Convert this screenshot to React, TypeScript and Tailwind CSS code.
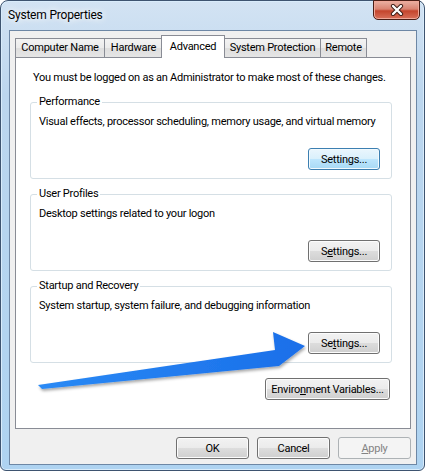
import React from 'react';

type BtnProps = {
  children: React.ReactNode;
  kind?: 'normal' | 'focus' | 'disabled';
  className?: string;
};

function Btn({ children, kind = 'normal', className = '' }: BtnProps) {
  const look =
    kind === 'focus'
      ? 'border-[#3c7fb1] bg-[linear-gradient(#eaf6fd,#d9f0fc_50%,#bee6fd_50%,#a7d9f5)] shadow-[inset_0_0_0_1px_#f2fafe] text-black'
      : kind === 'disabled'
        ? 'border-[#adb2b5] bg-[#f4f4f4] text-[#838383]'
        : 'border-[#707070] bg-[linear-gradient(#f2f2f2,#ebebeb_50%,#dddddd_50%,#cfcfcf)] shadow-[inset_0_0_0_1px_#fcfcfc] text-black';
  return (
    <div
      className={`flex items-center justify-center whitespace-nowrap rounded-[3px] border h-[22px] leading-none ${look} ${className}`}
    >
      {children}
    </div>
  );
}

function Group({ title, text, btn }: { title: string; text: string; btn: React.ReactNode }) {
  return (
    <fieldset className="w-[362px] rounded-[3px] border border-[#d5dfe5] px-0 pb-[8px]">
      <legend className="ml-[6px] px-[2px] leading-[16px]">{title}</legend>
      <div className="mt-[4px] whitespace-nowrap pl-[8px] leading-[16px]">{text}</div>
      <div className="mt-[18px] flex justify-end pr-[11px]">{btn}</div>
    </fieldset>
  );
}

const tabs = [
  { label: 'Computer Name', w: 'w-[90px]', ml: '' },
  { label: 'Hardware', w: 'w-[59px]', ml: '-ml-[1px]' },
  { label: 'Advanced', w: 'w-[64px]', ml: '-ml-[2px]', active: true },
  { label: 'System Protection', w: 'w-[97px]', ml: '-ml-[1px]' },
  { label: 'Remote', w: 'w-[47px]', ml: '-ml-[1px]' }
];

export default function App() {
  return (
    <div className="relative w-[426px] h-[474px] bg-white font-['Roboto',sans-serif] text-[11px] tracking-[-0.25px] text-black">
      <div className="flex h-[471px] w-[425px] flex-col rounded-t-[8px] rounded-b-[6px] border border-[#3e5470] bg-[linear-gradient(180deg,#d3e3f3,#bcd6ee_20%,#aed3f1)] shadow-[inset_0_0_0_1px_#d9ecfb]">
        {/* title bar */}
        <div className="flex h-[29px] items-start justify-between">
          <span className="pl-[7px] pt-[6px] text-[12px] leading-[16px] tracking-[-0.2px] text-black [text-shadow:0_0_6px_#fff,0_0_10px_#fff]">
            System Properties
          </span>
          <div className="mr-[4px] -mt-[1px] flex h-[20px] w-[47px] items-center justify-center rounded-b-[5px] border border-[#4a1e16] bg-[linear-gradient(#eab1a4,#d98371_45%,#c4452d_55%,#d8705a)] shadow-[inset_0_0_0_1px_#efa899]">
            <svg width="14" height="12" viewBox="0 0 14 12">
              <path d="M3 2 L11 10 M11 2 L3 10" stroke="#3b1b14" strokeWidth="4.2" strokeLinecap="round" />
              <path d="M3 2 L11 10 M11 2 L3 10" stroke="#ffffff" strokeWidth="2.4" strokeLinecap="round" />
            </svg>
          </div>
        </div>

        {/* client area */}
        <div className="mb-[5px] ml-[8px] mr-[7px] flex-1 border border-[#6d87a5] bg-[#f0f0f0] px-[5px]">
          <div className="flex h-[26px] items-end pt-[4px]">
            {tabs.map((t) =>
              t.active ? (
                <div
                  key={t.label}
                  className={`relative z-10 -mb-[1px] flex h-[23px] items-start justify-center whitespace-nowrap border border-b-0 border-[#898c95] bg-white pt-[3px] leading-[16px] ${t.w} ${t.ml}`}
                >
                  {t.label}
                </div>
              ) : (
                <div
                  key={t.label}
                  className={`flex h-[19px] items-center justify-center whitespace-nowrap border border-b-0 border-[#898c95] bg-[linear-gradient(#f3f3f3,#ebebeb_50%,#dedede_50%,#e5e5e5)] leading-[16px] ${t.w} ${t.ml}`}
                >
                  {t.label}
                </div>
              )
            )}
          </div>

          <div className="h-[372px] border border-[#898c95] bg-white pl-[14px]">
            <div className="mt-[12px] whitespace-nowrap pl-[3px] leading-[16px]">
              You must be logged on as an Administrator to make most of these changes.
            </div>
            <div className="mt-[8px] flex flex-col gap-[7px]">
              <Group
                title="Performance"
                text="Visual effects, processor scheduling, memory usage, and virtual memory"
                btn={<Btn kind="focus" className="w-[72px]">Settings...</Btn>}
              />
              <Group
                title="User Profiles"
                text="Desktop settings related to your logon"
                btn={
                  <Btn className="w-[72px]">
                    S<span className="underline">e</span>ttings...
                  </Btn>
                }
              />
              <Group
                title="Startup and Recovery"
                text="System startup, system failure, and debugging information"
                btn={
                  <Btn className="w-[72px]">
                    Se<span className="underline">t</span>tings...
                  </Btn>
                }
              />
            </div>
            <div className="mt-[15px] flex w-[360px] justify-end">
              <Btn className="w-[125px]">
                Enviro<span className="underline">n</span>ment Variables...
              </Btn>
            </div>
          </div>

          <div className="flex justify-end gap-[8px] pt-[8px]">
            <Btn className="w-[73px]">OK</Btn>
            <Btn className="w-[73px]">Cancel</Btn>
            <Btn kind="disabled" className="w-[73px]">
              <span className="underline">A</span>pply
            </Btn>
          </div>
        </div>
      </div>

      {/* annotation arrow */}
      <svg className="pointer-events-none absolute left-0 top-0" width="426" height="474" viewBox="0 0 426 474">
        <defs>
          <linearGradient id="arrowFill" x1="0" y1="0" x2="1" y2="0">
            <stop offset="0" stopColor="#2a8af5" />
            <stop offset="1" stopColor="#1a6fe9" />
          </linearGradient>
          <filter id="arrowShadow" x="-10%" y="-50%" width="120%" height="200%">
            <feDropShadow dx="1" dy="2" stdDeviation="1.6" floodColor="#000" floodOpacity="0.35" />
          </filter>
        </defs>
        <path
          d="M38 385 L275 350 L273 332 L305 346 L279 366 L42 389 Z"
          fill="url(#arrowFill)"
          filter="url(#arrowShadow)"
        />
      </svg>
    </div>
  );
}
